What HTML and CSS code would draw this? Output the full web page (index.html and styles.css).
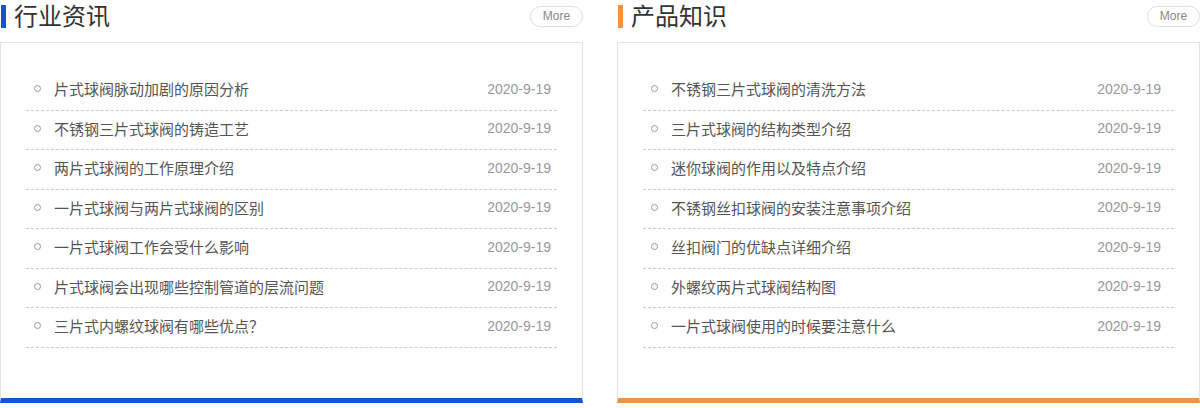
FILE: index.html
```html
<!DOCTYPE html>
<html lang="zh-CN">
<head>
    <meta charset="UTF-8">
    <title>新闻资讯</title>
    <link rel="stylesheet" href="styles.css">
</head>
<body>
    <div class="news clearFlo">
        <div class="newsBox blue">
            <div class="newsHead">
                <h2><span class="bar"></span>行业资讯</h2>
                <a class="more" href="javascript:void(0);">More</a>
            </div>
            <div class="newsCard">
                <ul class="newsList">
                    <li><a href="javascript:void(0);"><i></i>片式球阀脉动加剧的原因分析</a><span>2020-9-19</span></li>
                    <li><a href="javascript:void(0);"><i></i>不锈钢三片式球阀的铸造工艺</a><span>2020-9-19</span></li>
                    <li><a href="javascript:void(0);"><i></i>两片式球阀的工作原理介绍</a><span>2020-9-19</span></li>
                    <li><a href="javascript:void(0);"><i></i>一片式球阀与两片式球阀的区别</a><span>2020-9-19</span></li>
                    <li><a href="javascript:void(0);"><i></i>一片式球阀工作会受什么影响</a><span>2020-9-19</span></li>
                    <li><a href="javascript:void(0);"><i></i>片式球阀会出现哪些控制管道的层流问题</a><span>2020-9-19</span></li>
                    <li><a href="javascript:void(0);"><i></i>三片式内螺纹球阀有哪些优点？</a><span>2020-9-19</span></li>
                </ul>
            </div>
        </div>
        <div class="newsBox orange">
            <div class="newsHead">
                <h2><span class="bar"></span>产品知识</h2>
                <a class="more" href="javascript:void(0);">More</a>
            </div>
            <div class="newsCard">
                <ul class="newsList">
                    <li><a href="javascript:void(0);"><i></i>不锈钢三片式球阀的清洗方法</a><span>2020-9-19</span></li>
                    <li><a href="javascript:void(0);"><i></i>三片式球阀的结构类型介绍</a><span>2020-9-19</span></li>
                    <li><a href="javascript:void(0);"><i></i>迷你球阀的作用以及特点介绍</a><span>2020-9-19</span></li>
                    <li><a href="javascript:void(0);"><i></i>不锈钢丝扣球阀的安装注意事项介绍</a><span>2020-9-19</span></li>
                    <li><a href="javascript:void(0);"><i></i>丝扣阀门的优缺点详细介绍</a><span>2020-9-19</span></li>
                    <li><a href="javascript:void(0);"><i></i>外螺纹两片式球阀结构图</a><span>2020-9-19</span></li>
                    <li><a href="javascript:void(0);"><i></i>一片式球阀使用的时候要注意什么</a><span>2020-9-19</span></li>
                </ul>
            </div>
        </div>
    </div>
</body>
</html>
```

FILE: styles.css
```css
* {
    padding: 0;
    margin: 0;
    box-sizing: border-box;
}

body {
    font-family: "Liberation Sans", "Noto Sans CJK SC", sans-serif;
    background: #fff;
}

ul {
    list-style: none;
}

a {
    text-decoration: none;
}

div.news {
    display: flex;
    justify-content: space-between;
    width: 1200px;
    height: 408px;
}

div.newsBox {
    width: 583px;
}

div.newsHead {
    display: flex;
    align-items: center;
    justify-content: space-between;
    height: 33px;
    margin-bottom: 9px;
}

div.newsHead h2 {
    display: flex;
    align-items: center;
    font-size: 24px;
    font-weight: normal;
    line-height: 33px;
    color: #333;
}

div.newsHead h2 span.bar {
    width: 5px;
    height: 23px;
    margin: 0 8px 0 1px;
}

div.newsHead a.more {
    width: 53px;
    height: 21px;
    line-height: 19px;
    border: 1px solid #ddd;
    border-radius: 11px;
    text-align: center;
    font-size: 12px;
    color: #888;
}

div.newsCard {
    height: 361px;
    border: 1px solid #e4e4e4;
    border-bottom-width: 5px;
    padding: 28px 25px 0;
}

div.blue span.bar {
    background-color: #0b5acb;
}

div.blue div.newsCard {
    border-bottom-color: #0b5acb;
}

div.orange span.bar {
    background-color: #f49343;
}

div.orange div.newsCard {
    border-bottom-color: #f49343;
}

ul.newsList li {
    display: flex;
    align-items: center;
    justify-content: space-between;
    height: 39.5px;
    padding: 0 6px 3px 8px;
    border-bottom: 1px dashed #ccc;
}

div.orange ul.newsList li {
    padding-right: 13px;
}

ul.newsList li a {
    display: flex;
    align-items: center;
    font-size: 15px;
    color: #555;
}

ul.newsList li a i {
    width: 7px;
    height: 7px;
    border: 1px solid #999;
    border-radius: 50%;
    margin-right: 13px;
}

ul.newsList li span {
    font-size: 14px;
    color: #999;
}
```
